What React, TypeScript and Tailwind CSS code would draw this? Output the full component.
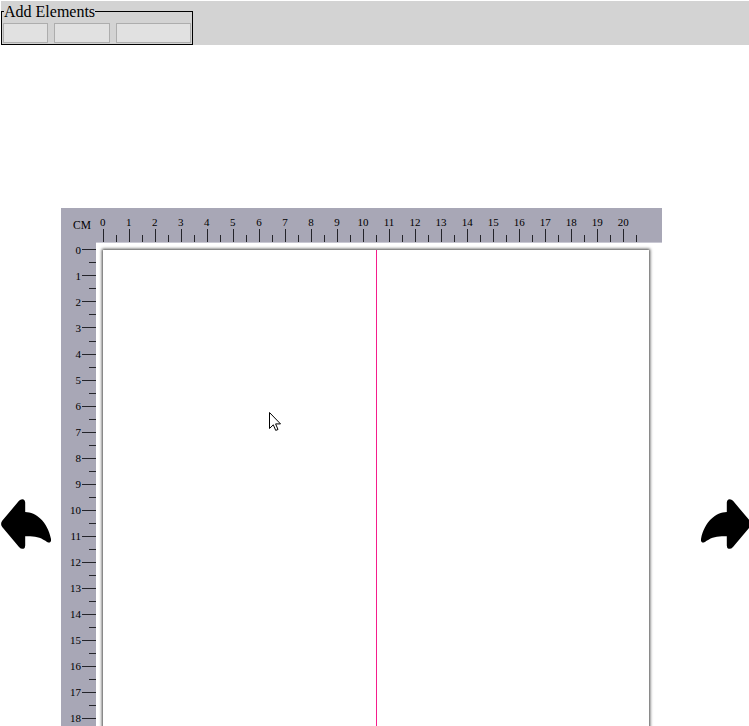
const topNumbers = Array.from({ length: 21 }, (_, i) => i);
const sideNumbers = Array.from({ length: 19 }, (_, i) => i);
const topTicks = Array.from({ length: 42 }, (_, i) => i);
const sideTicks = Array.from({ length: 37 }, (_, i) => i);

function Arrow({ flip = false }: { flip?: boolean }) {
  return (
    <svg viewBox="0 0 50 50" className={`h-[50px] w-[50px] shrink-0 ${flip ? "-scale-x-100" : ""}`}>
      <path d="M1.2 21.8 18 1.8Q20-.5 22.6.4 24.2 1.2 24.2 3.5V13C35 13.2 46.5 22.5 50 40Q50.4 42.6 48.8 43.4C47.3 44 46 43 44.4 41.8 38.5 37.8 33 37 24.2 37.2V46.5Q24.2 49 22.5 49.7 20.2 50.4 18 48L1.2 28Q-1 25 1.2 21.8Z" />
    </svg>
  );
}

function TopRuler() {
  return (
    <div className="h-[35px] w-[601px] shrink-0 overflow-hidden bg-[#a8a7b6]">
      <div className="flex h-[21px]">
        <span className="w-[28.7px] shrink-0 pl-3 pt-[11px] text-[11.5px] leading-3">CM</span>
        {topNumbers.map((n) => (
          <span key={n} className="w-[26.04px] shrink-0 pt-2 text-center text-[11px] leading-3">{n}</span>
        ))}
      </div>
      <div className="flex h-[13px] items-end pl-[42px]">
        {topTicks.map((n) => (
          <i key={n} className={`w-[13.015px] shrink-0 border-l border-[#24242a] ${n % 2 ? "h-[7px]" : "h-[13px]"}`} />
        ))}
      </div>
      <div className="ml-[35px] h-px bg-[#c9c8d3]" />
    </div>
  );
}

function SideRuler() {
  return (
    <div className="flex h-[483px] w-[35px] shrink-0 overflow-hidden bg-[#a8a7b6]">
      <div className="w-[20px] shrink-0">
        {sideNumbers.map((n) => (
          <div key={n} className="flex h-[26.02px] items-start justify-end text-[11px] leading-[14px]">{n}</div>
        ))}
      </div>
      <div className="flex w-[15px] shrink-0 flex-col items-end pt-[6.4px]">
        {sideTicks.map((n) => (
          <i key={n} className={`h-[13.02px] shrink-0 border-t border-[#24242a] ${n % 2 ? "w-[7px]" : "w-[14px]"}`} />
        ))}
      </div>
    </div>
  );
}

export default function App() {
  return (
    <div className="relative flex h-[726px] w-[749px] flex-col overflow-hidden bg-white pl-px pt-px font-['Liberation_Serif',serif] text-black">
      <header className="h-11 shrink-0 bg-[#d3d3d3]">
        <fieldset className="h-11 w-[192px] border border-black px-px">
          <legend className="ml-px h-[21px] text-[16px] leading-[21px]">Add Elements</legend>
          <div className="flex gap-[6px] pt-px">
            <button aria-label="Add first element" className="h-5 w-[45px] border border-[#adadad] bg-[#e1e1e1]" />
            <button aria-label="Add second element" className="h-5 w-[56px] border border-[#adadad] bg-[#e1e1e1]" />
            <button aria-label="Add third element" className="h-5 w-[75px] border border-[#adadad] bg-[#e1e1e1]" />
          </div>
        </fieldset>
      </header>
      <main className="flex flex-1">
        <div className="w-[60px] shrink-0 pt-[454px]"><Arrow /></div>
        <div className="w-[601px] shrink-0 pt-[163px]">
          <TopRuler />
          <div className="flex">
            <SideRuler />
            <div className="ml-[7px] mt-[7px] flex h-[500px] w-[546px] bg-white shadow-[0_0_3px_1px_#444]">
              <div className="ml-[273px] w-px bg-[#f51d8c]" />
            </div>
          </div>
        </div>
        <div className="w-[88px] shrink-0 pl-[39px] pt-[454px]"><Arrow flip /></div>
      </main>
      <svg viewBox="0 0 12 19" className="absolute left-[269px] top-[412px] h-[19px] w-3">
        <path d="M.5.5v16l3.8-3.7 2.4 5.6 2.3-.9-2.4-5.6h4.9Z" fill="white" stroke="black" />
      </svg>
    </div>
  );
}
